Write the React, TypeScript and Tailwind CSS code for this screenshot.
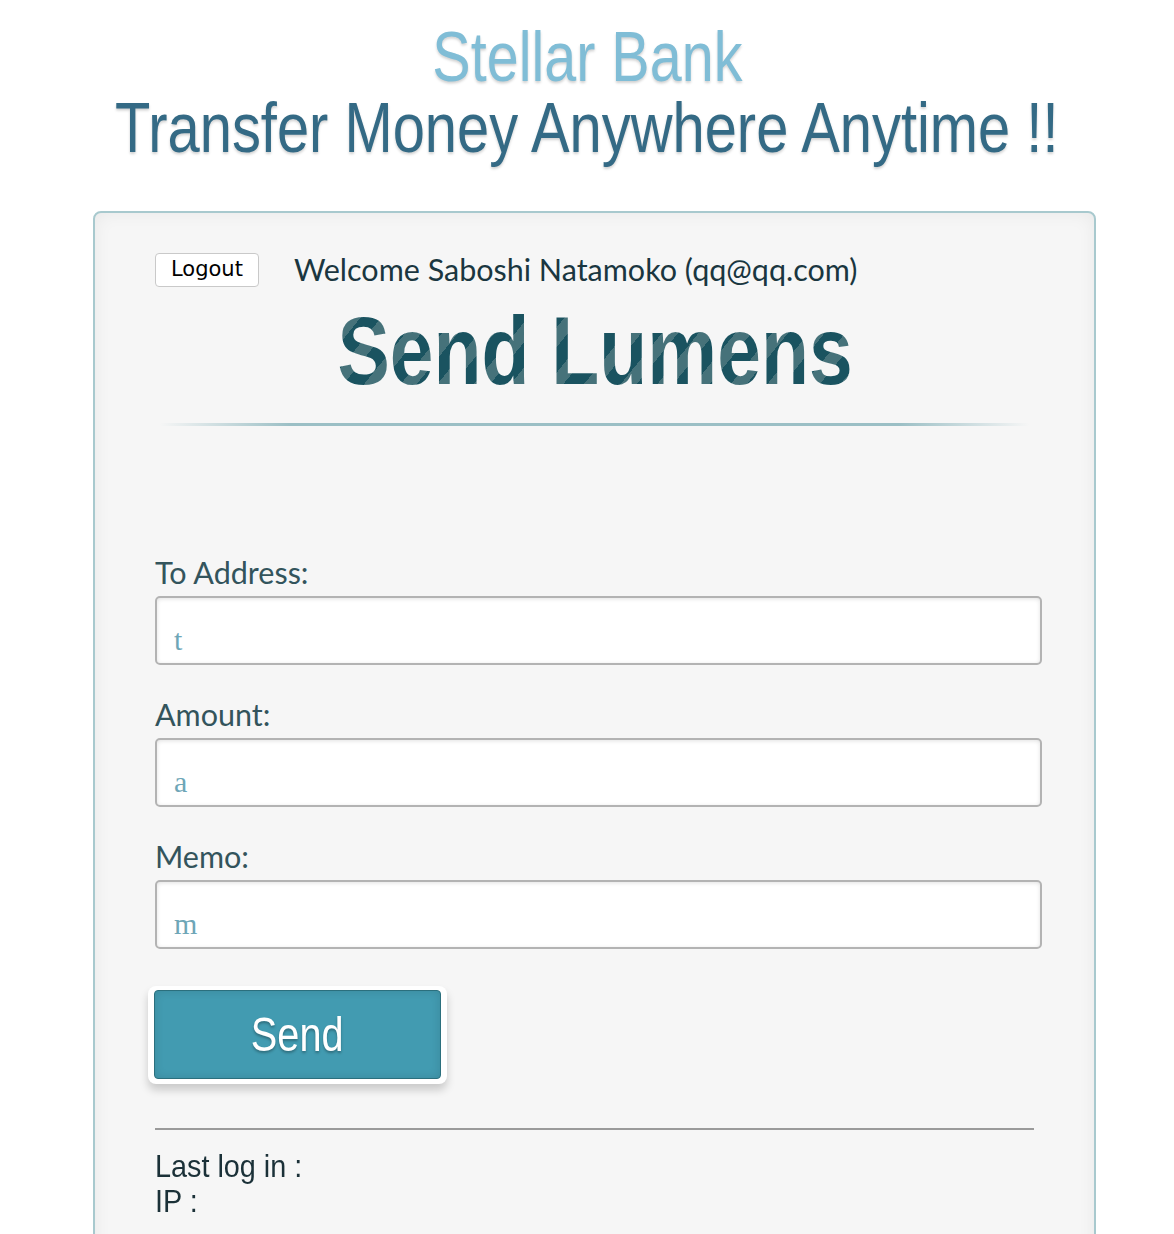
const narrow = "font-['Liberation_Sans_Narrow','Arial_Narrow','Liberation_Sans',sans-serif]";
const body = "font-['Lato','Open_Sans',sans-serif]";

const fields = [
  { label: "To Address:", value: "t" },
  { label: "Amount:", value: "a" },
  { label: "Memo:", value: "m" },
];

export default function App() {
  return (
    <div className="min-h-[1234px] bg-white pb-10">
      <header className={`${narrow} pt-[22px] text-center [text-shadow:0_2px_3px_rgba(0,0,0,0.18)]`}>
        <h1 className="text-[71px] leading-[70px] text-[#80bdd6]">
          <span className="inline-block scale-x-[0.81]">Stellar Bank</span>
        </h1>
        <h2 className="text-[71px] leading-[72px] text-[#346a85]">
          <span className="inline-block scale-x-[0.815]">Transfer Money Anywhere Anytime !!</span>
        </h2>
      </header>

      <main className="ml-[93px] mt-[47px] w-[1003px] rounded-[8px] border-2 border-[#a8c9ce] bg-[#f6f6f6] px-[60px] pb-[80px] pt-[34px] shadow-[inset_0_0_18px_rgba(0,0,0,0.06)]">
        <div className="flex items-center">
          <button className="h-[34px] rounded-[4px] border border-[#c9c9c9] bg-white px-[15px] font-['DejaVu_Sans',sans-serif] text-[21px] text-black">
            Logout
          </button>
          <p className={`${body} ml-[35px] text-[30.5px] text-[#1a3640]`}>
            Welcome Saboshi Natamoko (qq@qq.com)
          </p>
        </div>

        <h3 className={`${narrow} mt-[8px] text-center text-[97px] font-bold leading-[100px]`}>
          <span className="inline-block scale-x-[0.81] bg-[repeating-linear-gradient(135deg,#1a5360_0_18px,#46727a_18px_32px)] bg-clip-text text-transparent">
            Send Lumens
          </span>
        </h3>

        <div className="mx-[5px] mt-[22px] h-[3px] bg-[linear-gradient(90deg,rgba(155,191,197,0),#9bbfc5_15%,#9bbfc5_85%,rgba(155,191,197,0))]" />

        <form className="mt-[128px] w-[887px]">
          {fields.map((f) => (
            <div key={f.label} className="mb-[31px]">
              <label className={`${body} block text-[30.5px] leading-[36px] text-[#33545c]`}>
                {f.label}
              </label>
              <input
                readOnly
                defaultValue={f.value}
                className="mt-[6px] block h-[69px] w-full rounded-[5px] border-2 border-[#b3b3b3] bg-white px-[17px] pt-[20px] font-['Liberation_Serif',serif] text-[30px] text-[#6ea6b7] shadow-[inset_0_1px_4px_rgba(0,0,0,0.12)] outline-none"
              />
            </div>
          ))}

          <div className="-ml-[7px] mt-[6px] inline-block rounded-[8px] bg-white p-[4px_6px_5px_6px] shadow-[0_6px_8px_rgba(0,0,0,0.18)]">
            <button
              type="button"
              className={`${narrow} h-[89px] w-[287px] rounded-[4px] border border-[#2b6f7d] bg-[#429bb1] text-[49px] text-white shadow-[inset_0_0_10px_rgba(0,0,0,0.12)] [text-shadow:0_2px_3px_rgba(0,0,0,0.3)]`}
            >
              <span className="inline-block scale-x-[0.81]">Send</span>
            </button>
          </div>
        </form>

        <hr className="mt-[44px] w-[879px] border-t-2 border-[#9a9a9a]" />

        <div className={`${narrow} mt-[19px] text-[32px] leading-[35px] text-[#1b3138]`}>
          <p className="origin-left scale-x-[0.9]">Last log in :</p>
          <p className="origin-left scale-x-[0.9]">IP :</p>
        </div>
      </main>
    </div>
  );
}
